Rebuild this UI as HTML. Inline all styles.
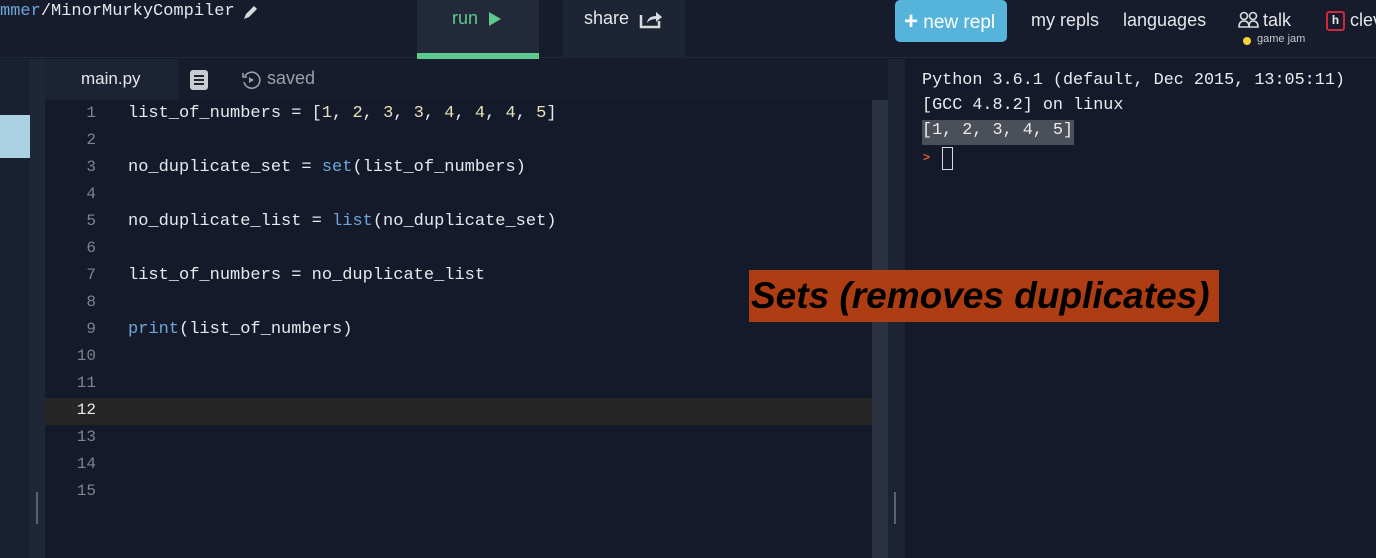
<!DOCTYPE html>
<html><head><meta charset="utf-8"><style>
*{margin:0;padding:0;box-sizing:border-box}
body{width:1376px;height:558px;overflow:hidden;background:#141a2a;position:relative;font-family:"Liberation Sans",sans-serif}
.a{position:absolute}
.mono{font-family:"Liberation Mono","DejaVu Sans Mono",monospace}
.code div{height:27px;line-height:27px;white-space:pre;color:#e6e8ec;font-size:17px}
.lns div{height:27px;line-height:27px;color:#7d838f;text-align:right;font-size:16px}
.b{color:#6fa6d8}.n{color:#e8e0b8}
.con div{white-space:pre;color:#eaecef;font-size:16.8px;height:25px;line-height:25px}
.nav{color:#e4e6ea;font-size:18px}
</style></head><body>
<div class="a" style="left:0;top:0;width:1376px;height:58px;background:#161c2b;border-bottom:1px solid #222a3a"></div>
<div class="a mono" style="left:0;top:2px;font-size:17px;color:#e4e6ea;white-space:pre"><span style="color:#6fa6d8">mmer</span>/MinorMurkyCompiler</div>
<svg class="a" style="left:242px;top:3px" width="18" height="18" viewBox="0 0 18 18"><path d="M2 16 L4 11 L12 3 L15 6 L7 14 Z" fill="#d8dade"/></svg>
<div class="a" style="left:417px;top:0;width:122px;height:58px;background:#222a39"></div>
<div class="a" style="left:417px;top:53px;width:122px;height:6px;background:#5ec98c"></div>
<div class="a" style="left:452px;top:8px;font-size:18px;color:#5ec98c">run</div>
<svg class="a" style="left:488px;top:11px" width="14" height="16"><path d="M1 1 L13 8 L1 15Z" fill="#5ec98c"/></svg>
<div class="a" style="left:563px;top:0;width:122px;height:58px;background:#1d2433"></div>
<div class="a nav" style="left:584px;top:8px">share</div>
<svg class="a" style="left:639px;top:9px" width="24" height="20" viewBox="0 0 24 20"><path d="M2 6 V18 H20 V12" stroke="#d8dade" stroke-width="2.5" fill="none"/><path d="M8 14 Q9 7 17 7 V3 L23 8 L17 13 V10 Q11 10 8 14Z" fill="#d8dade"/></svg>
<div class="a" style="left:895px;top:0;width:112px;height:42px;background:#56b4db;border-radius:5px"></div>
<div class="a" style="left:904px;top:7px;font-size:19px;color:#fff"><b style="font-size:24px;position:relative;top:1px">+</b> new repl</div>
<div class="a nav" style="left:1031px;top:10px">my repls</div>
<div class="a nav" style="left:1123px;top:10px">languages</div>
<svg class="a" style="left:1238px;top:11px" width="22" height="18" viewBox="0 0 22 18"><circle cx="6" cy="5" r="3.5" stroke="#d8dade" stroke-width="1.6" fill="none"/><circle cx="15" cy="5" r="3.5" stroke="#d8dade" stroke-width="1.6" fill="none"/><path d="M1 16 Q1 10 6 10 Q11 10 11 16Z M11 16 Q11 10 15 10 Q20 10 20 16 Z" stroke="#d8dade" stroke-width="1.6" fill="none"/></svg>
<div class="a nav" style="left:1263px;top:10px">talk</div>
<div class="a" style="left:1243px;top:37px;width:8px;height:8px;border-radius:50%;background:#f3d23a"></div>
<div class="a" style="left:1257px;top:33px;font-size:11px;color:#c8cad0">game jam</div>
<div class="a mono" style="left:1326px;top:11px;width:19px;height:20px;border:2px solid #d0283a;border-radius:3px;color:#e4e6ea;font-size:12px;text-align:center;line-height:16px;font-weight:bold">h</div>
<div class="a nav" style="left:1350px;top:10px">clev</div>
<div class="a" style="left:0;top:59px;width:30px;height:499px;background:#19202f"></div>
<div class="a" style="left:0;top:115px;width:30px;height:43px;background:#a9d1e1"></div>
<div class="a" style="left:30px;top:59px;width:15px;height:499px;background:#1f2636"></div>
<div class="a" style="left:36px;top:492px;width:2px;height:32px;background:#5a6272"></div>
<div class="a" style="left:45px;top:59px;width:843px;height:41px;background:#161c2b"></div>
<div class="a" style="left:45px;top:59px;width:133px;height:41px;background:#1c2333"></div>
<div class="a" style="left:81px;top:69px;font-size:17px;color:#e4e6ea">main.py</div>
<div class="a" style="left:190px;top:70px;width:18px;height:20px;background:#c9cbd0;border-radius:3px"></div>
<div class="a" style="left:194px;top:75px;width:10px;height:2px;background:#1c2333;box-shadow:0 4px 0 #1c2333,0 8px 0 #1c2333"></div>
<svg class="a" style="left:241px;top:70px" width="20" height="20" viewBox="0 0 20 20"><path d="M4 6 A8 8 0 1 1 3 12" stroke="#9a9fa8" stroke-width="1.6" fill="none"/><path d="M2 3 V7 H6" stroke="#9a9fa8" stroke-width="1.6" fill="none"/><path d="M8 7 L13 10 L8 13Z" fill="#9a9fa8"/></svg>
<div class="a" style="left:267px;top:68px;font-size:18px;color:#9a9fa8">saved</div>
<div class="a" style="left:45px;top:398px;width:843px;height:27px;background:#262626"></div>
<div class="a" style="left:872px;top:100px;width:16px;height:458px;background:#2a3140"></div>
<div class="a" style="left:888px;top:59px;width:17px;height:499px;background:#1c2333"></div>
<div class="a" style="left:894px;top:492px;width:2px;height:32px;background:#5a6272"></div>
<div class="a mono lns" style="left:60px;top:100px;width:36px">
<div>1</div><div>2</div><div>3</div><div>4</div><div>5</div><div>6</div><div>7</div><div>8</div><div>9</div><div>10</div><div>11</div><div style="color:#e6e8ec">12</div><div>13</div><div>14</div><div>15</div>
</div>
<div class="a mono code" style="left:128px;top:100px">
<div>list_of_numbers = [<span class="n">1</span>, <span class="n">2</span>, <span class="n">3</span>, <span class="n">3</span>, <span class="n">4</span>, <span class="n">4</span>, <span class="n">4</span>, <span class="n">5</span>]</div>
<div> </div>
<div>no_duplicate_set = <span class="b">set</span>(list_of_numbers)</div>
<div> </div>
<div>no_duplicate_list = <span class="b">list</span>(no_duplicate_set)</div>
<div> </div>
<div>list_of_numbers = no_duplicate_list</div>
<div> </div>
<div><span class="b">print</span>(list_of_numbers)</div>
</div>
<div class="a" style="left:922px;top:120px;width:152px;height:25px;background:#4a4f58"></div>
<div class="a mono con" style="left:922px;top:68px">
<div>Python 3.6.1 (default, Dec 2015, 13:05:11)</div>
<div>[GCC 4.8.2] on linux</div>
<div>[1, 2, 3, 4, 5]</div>
</div>
<div class="a" style="left:923px;top:150px;color:#e0602a;font-size:12px;font-weight:bold">&gt;</div>
<div class="a" style="left:942px;top:147px;width:11px;height:23px;border:1.5px solid #d8dade"></div>
<div class="a" style="left:749px;top:270px;width:470px;height:52px;background:#ae3d13"></div>
<div class="a" style="left:751px;top:274px;font-size:37px;line-height:44px;font-weight:bold;font-style:italic;color:#000;white-space:nowrap">Sets (removes duplicates)</div>
</body></html>
